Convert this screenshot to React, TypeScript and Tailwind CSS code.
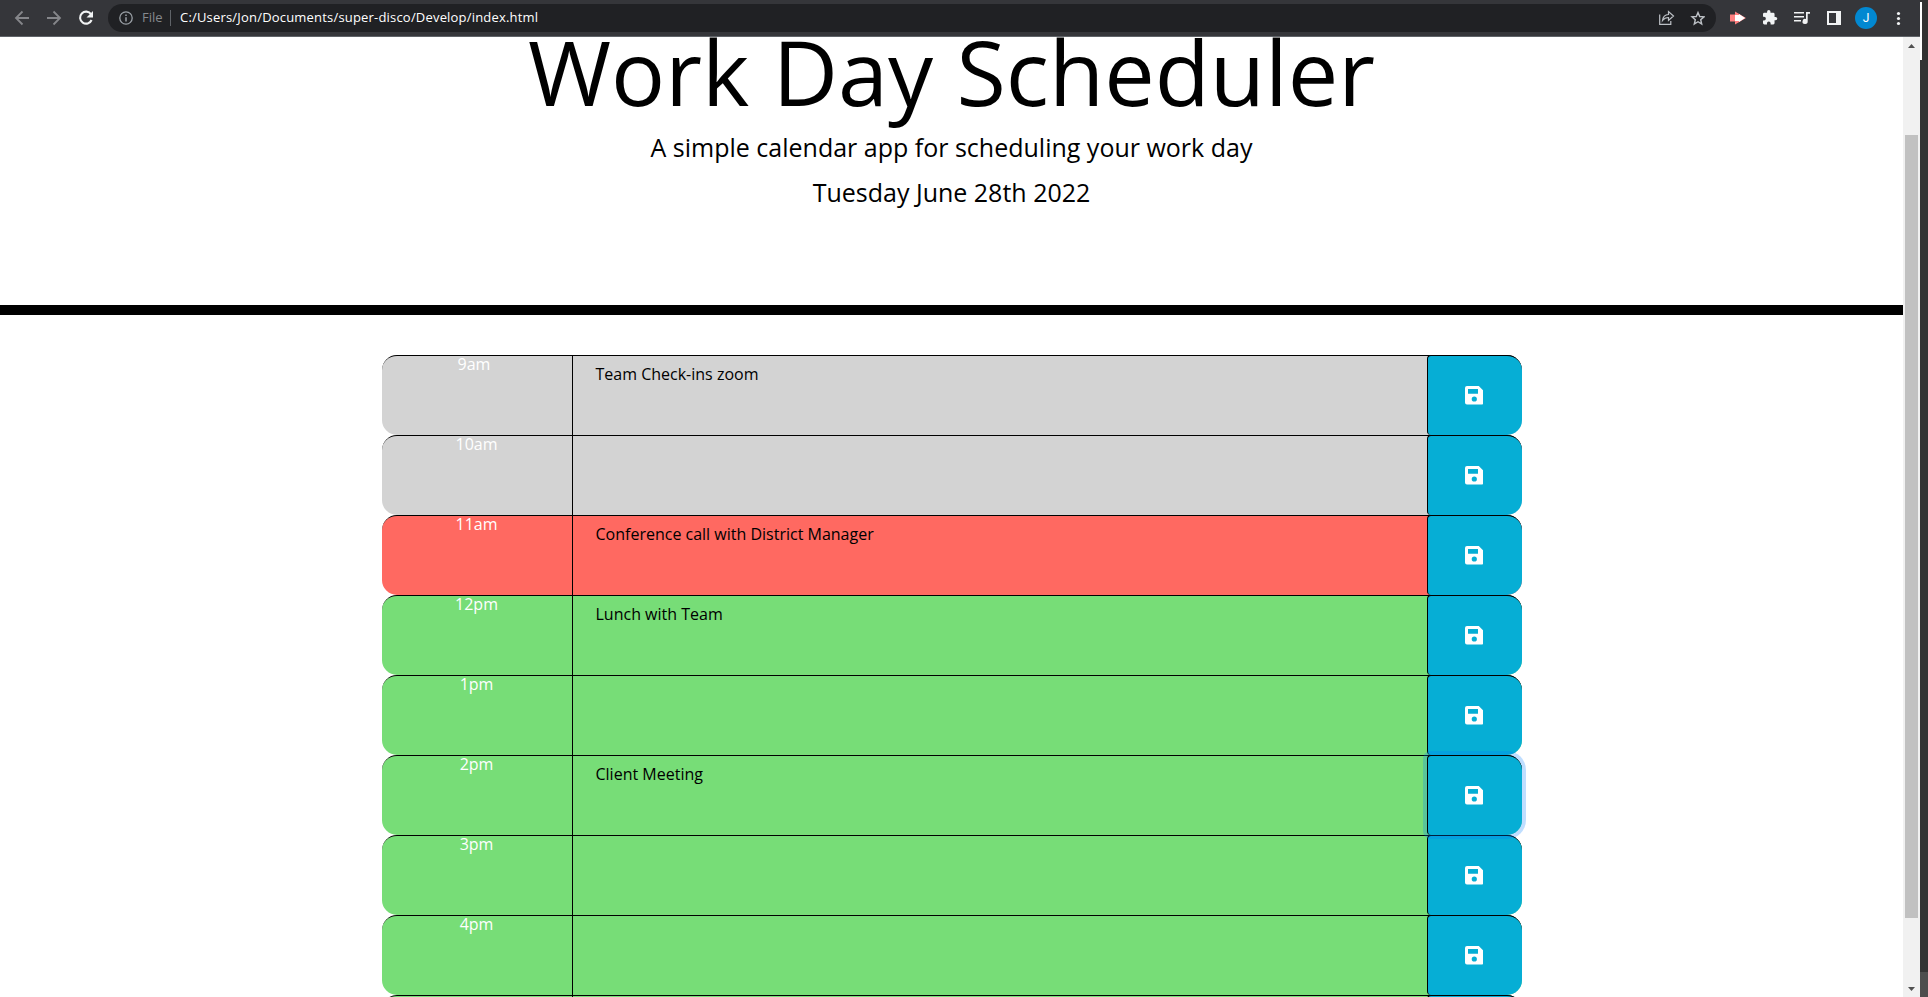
import React from "react";

type Tense = "past" | "present" | "future";

const rows: { hour: string; note: string; tense: Tense; focused?: boolean }[] = [
  { hour: "9am", note: "Team Check-ins zoom", tense: "past" },
  { hour: "10am", note: "", tense: "past" },
  { hour: "11am", note: "Conference call with District Manager", tense: "present" },
  { hour: "12pm", note: "Lunch with Team", tense: "future" },
  { hour: "1pm", note: "", tense: "future" },
  { hour: "2pm", note: "Client Meeting", tense: "future", focused: true },
  { hour: "3pm", note: "", tense: "future" },
  { hour: "4pm", note: "", tense: "future" },
  { hour: "", note: "", tense: "future" },
];

const tenseClass: Record<Tense, string> = {
  past: "bg-[#d3d3d3]",
  present: "bg-[#ff6961]",
  future: "bg-[#77dd77]",
};

function SaveIcon() {
  return (
    <svg className="size-[18.5px]" viewBox="0 0 18.5 18.5">
      <path
        fill="#fff"
        fillRule="evenodd"
        d="M2 0H13.8L18.5 4.7V16.5a2 2 0 0 1-2 2H2a2 2 0 0 1-2-2V2a2 2 0 0 1 2-2ZM3 3V7.7H13V3ZM9.3 10.4a2.6 2.6 0 1 0 0 5.2a2.6 2.6 0 0 0 0-5.2Z"
      />
    </svg>
  );
}

function BrowserBar() {
  return (
    <div className="flex h-[37px] w-[1920px] shrink-0 items-start border-b border-[#5f6368] bg-[#35363a]">
      <svg className="h-9 w-[108px] shrink-0" viewBox="0 0 108 36" fill="none">
        <g stroke="#85868a" strokeWidth="1.8">
          <path d="M29 18H16.500M22.500 11.500L16 18L22.500 24.500" />
          <path d="M47 18H59.500M53.500 11.500L60 18L53.500 24.500" />
        </g>
        <path d="M91 14.200A6 6 0 1 0 91.600 20" stroke="#f1f3f4" strokeWidth="2.100" />
        <path d="M93 11V17.500H86.500Z" fill="#f1f3f4" />
      </svg>
      <div className="mt-1 flex h-7 w-[1608px] items-center rounded-full bg-[#202124] pl-[11px] font-['Open_Sans',sans-serif] text-[13px]">
        <svg className="size-[14px]" viewBox="0 0 14 14" fill="none">
          <circle cx="7" cy="7" r="6.200" stroke="#9aa0a6" strokeWidth="1.300" />
          <path d="M7 6.200V10.500M7 3.500V5" stroke="#9aa0a6" strokeWidth="1.500" />
        </svg>
        <span className="ml-[9px] w-5 text-[#85898e]">File</span>
        <span className="ml-[8px] h-4 w-px bg-[#5f6368]" />
        <span className="ml-[9px] flex-1 tracking-[0.19px] text-white">C:/Users/Jon/Documents/super-disco/Develop/index.html</span>
        <svg className="h-4 w-[46px]" viewBox="0 0 46 16" fill="none" stroke="#bdc1c6" strokeWidth="1.200">
          <path d="M.700 4.500V14.300H11.800V11" />
          <path d="M3.500 10.500C4 6.500 6 4.700 9.500 4.500V1.500L14.500 6L9.500 10.500V7.500C6.500 7.500 5 8.500 3.500 10.500Z" />
          <path strokeWidth="1.400" d="M39 2.500L40.700 6.500L45 6.900L41.700 9.700L42.700 14L39 11.700L35.300 14L36.300 9.700L33 6.900L37.300 6.500Z" />
        </svg>
        <span className="w-[11px]" />
      </div>
      <svg className="h-9 w-[200px] shrink-0" viewBox="1716 0 200 36">
        <path d="M1730 14.500H1735V11.500L1746 18L1735 24.500V21.500H1730Z" fill="#ff8080" />
        <path d="M1735 15H1739V14L1745 18L1739 22V21H1735Z" fill="#fff" />
        <path transform="translate(1763 10.800) scale(.68)" fill="#f1f3f4" d="M18.500 9H17V5a2 2 0 0 0-2-2H11V1.500a2.500 2.500 0 0 0-5 0V3H2A2 2 0 0 0 0 5V8.800H1.500a2.700 2.700 0 0 1 0 5.400H0V18a2 2 0 0 0 2 2H5.800V18.500a2.700 2.700 0 0 1 5.400 0V20H15a2 2 0 0 0 2-2V14h1.500a2.500 2.500 0 0 0 0-5Z" />
        <g fill="#f1f3f4">
          <path d="M1794 12h10v1.600h-10zM1794 16h10v1.600h-10zM1794 20h7v1.600h-7z" />
          <path d="M1806 12h4v1.800h-2.300v7.500a2.600 2.600 0 1 1-1.700-2.300z" />
          <path fillRule="evenodd" d="M1827 11h14v14h-14zM1829 13v10h7v-10z" />
          <circle cx="1898.500" cy="13.500" r="1.600" />
          <circle cx="1898.500" cy="18.500" r="1.600" />
          <circle cx="1898.500" cy="23.500" r="1.600" />
        </g>
        <circle cx="1866" cy="18" r="11" fill="#0288d1" />
        <text x="1866" y="22" textAnchor="middle" fill="#fff" className="font-['Roboto',sans-serif] text-[12px]">J</text>
      </svg>
    </div>
  );
}

function Scrollbar() {
  return (
    <div className="flex w-[17px] shrink-0 flex-col items-center bg-[#f1f1f1]">
      <svg className="mt-[7px] h-1 w-[7px]" viewBox="0 0 7 4"><path d="M0 4L3.500 0L7 4Z" fill="#505050" /></svg>
      <div className="mt-[87px] h-[783px] w-[13px] bg-[#c1c1c1]" />
      <svg className="mt-[69px] h-1 w-[7px]" viewBox="0 0 7 4"><path d="M0 0L3.500 4L7 0Z" fill="#505050" /></svg>
    </div>
  );
}

export default function App() {
  return (
    <div className="flex h-[997px] w-[1928px] overflow-hidden bg-[#333]">
      <div className="flex w-[1920px] shrink-0 flex-col">
        <BrowserBar />
        <div className="flex min-h-0 flex-1">
          <main className="flex w-[1903px] flex-col items-center overflow-hidden bg-white font-['Open_Sans',sans-serif] text-black">
            <header className="flex h-[278px] w-full shrink-0 flex-col items-center border-b-10 border-black text-center">
              <h1 className="text-[90px] leading-[68px]">Work Day Scheduler</h1>
              <p className="mt-[23px] text-[25px] leading-[38px]">A simple calendar app for scheduling your work day</p>
              <p className="mt-[7px] text-[25px] leading-[38px]">Tuesday June 28th 2022</p>
            </header>
            <div className="mt-10 w-[1140px]">
              {rows.map((r, i) => (
                <div key={i} className="flex h-20">
                  <div className={`w-[190px] shrink-0 rounded-l-[15px] border-t border-black text-center text-base leading-[17px] text-white ${r.hour === "9am" ? "pr-[5px]" : ""} ${tenseClass[r.tense]}`}>
                    {r.hour}
                  </div>
                  <div className={`flex-1 border-t border-l border-black pt-[6px] pl-[23px] text-base leading-6 ${tenseClass[r.tense]}`}>
                    {r.note}
                  </div>
                  <div className={`flex w-[95px] shrink-0 rounded-r-[15px] border-t border-black ${tenseClass[r.tense]}`}>
                    <button className={`-mt-px flex w-full items-center justify-center rounded-l-[4px] rounded-r-[15px] border-t border-l border-black bg-[#06aed5] pr-px ${r.focused ? "relative shadow-[0_0_0_4px_rgba(0,123,255,0.25)]" : ""}`}>
                      <SaveIcon />
                    </button>
                  </div>
                </div>
              ))}
            </div>
          </main>
          <Scrollbar />
        </div>
      </div>
      <div className="flex w-2 flex-col">
        <div className="h-[2px] w-2 bg-[#333]" />
        <div className="h-[58px] w-[2px] bg-white" />
        <div className="h-[912px]" />
        <div className="h-[25px] bg-[#4d4d4d]" />
      </div>
    </div>
  );
}
